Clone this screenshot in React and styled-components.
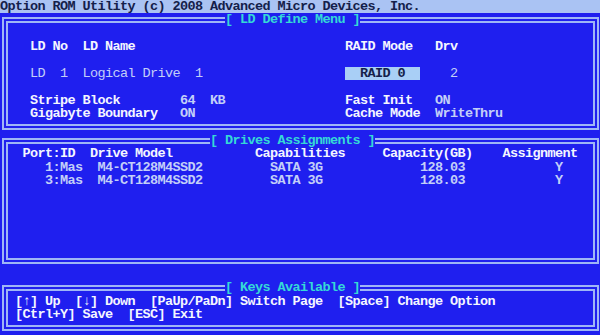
import React from "react";
import styled, { createGlobalStyle } from "styled-components";

const COL = 7.5;
const ROW = 13.4;

const GlobalStyle = createGlobalStyle`
  html, body {
    margin: 0;
    padding: 0;
    background: #1f1fef;
    overflow: hidden;
  }
`;

const tones = {
  label: "#f4f6ff",
  value: "#c3cff8",
  dark: "#14204a",
  title: "#35d9d6",
};

const Screen = styled.div`
  width: 600px;
  height: 335px;
  background: #1f1fef;
  display: flex;
  flex-direction: column;
  font-family: "Liberation Mono", "DejaVu Sans Mono", monospace;
  font-size: 13.5px;
  letter-spacing: -0.601px;
  line-height: ${ROW}px;
  overflow: hidden;
`;

const TitleBar = styled.div`
  height: ${ROW}px;
  background: #aac3f3;
  display: grid;
  grid-template-columns: repeat(80, ${COL}px);
  align-items: center;
`;

const Panel = styled.div`
  position: relative;
  margin: ${(p) => p.$gap}px 1.5px 0;
  border: 6px double #9fb6f6;
  padding: ${(ROW - 6) / 2}px 0;
  display: flex;
  flex-direction: column;
`;

const PanelTitle = styled.div`
  position: absolute;
  top: ${-6 + 3 - ROW / 2}px;
  left: ${(p) => p.$col * COL - COL}px;
  height: ${ROW}px;
  background: #1f1fef;
  color: ${tones.title};
  font-weight: 700;
  white-space: pre;
`;

const Row = styled.div`
  height: ${ROW}px;
  display: grid;
  grid-template-columns: repeat(78, ${COL}px);
  align-items: center;
`;

const Cell = styled.span`
  grid-column: ${(p) => p.$col} / span ${(p) => p.$span};
  color: ${(p) => tones[p.$tone || "label"]};
  font-weight: ${(p) => (p.$thin ? 400 : 700)};
  white-space: pre;
`;

const BarText = styled(Cell)`
  grid-column: ${(p) => p.$col + 1} / span ${(p) => p.$span};
`;

const Highlight = styled.span`
  grid-column: ${(p) => p.$col} / span ${(p) => p.$span};
  height: ${ROW}px;
  background: #a9cff6;
  color: ${tones.dark};
  font-weight: 700;
  white-space: pre;
  display: flex;
  align-items: center;
  justify-content: center;
`;

const ldRows = [
  [],
  [
    { c: 4, t: "LD No" },
    { c: 11, t: "LD Name" },
    { c: 46, t: "RAID Mode" },
    { c: 58, t: "Drv" },
  ],
  [],
  [
    { c: 4, t: "LD  1", tone: "value", thin: true },
    { c: 11, t: "Logical Drive  1", tone: "value", thin: true },
    { c: 46, t: "RAID 0", span: 10, box: true },
    { c: 60, t: "2", tone: "value", thin: true },
  ],
  [],
  [
    { c: 4, t: "Stripe Block" },
    { c: 24, t: "64  KB", tone: "value" },
    { c: 46, t: "Fast Init" },
    { c: 58, t: "ON", tone: "value" },
  ],
  [
    { c: 4, t: "Gigabyte Boundary" },
    { c: 24, t: "ON", tone: "value" },
    { c: 46, t: "Cache Mode" },
    { c: 58, t: "WriteThru", tone: "value" },
  ],
];

const drives = [
  { port: "1:Mas", model: "M4-CT128M4SSD2", cap: "SATA 3G", size: "128.03", asg: "Y" },
  { port: "3:Mas", model: "M4-CT128M4SSD2", cap: "SATA 3G", size: "128.03", asg: "Y" },
];

const driveRows = [
  [
    { c: 3, t: "Port:ID" },
    { c: 12, t: "Drive Model" },
    { c: 34, t: "Capabilities" },
    { c: 51, t: "Capacity(GB)" },
    { c: 67, t: "Assignment" },
  ],
  ...drives.map((d) => [
    { c: 6, t: d.port, tone: "value" },
    { c: 13, t: d.model, tone: "value" },
    { c: 36, t: d.cap, tone: "value" },
    { c: 56, t: d.size, tone: "value" },
    { c: 74, t: d.asg, tone: "value" },
  ]),
  [],
  [],
  [],
  [],
  [],
];

const keyRows = [
  [
    { c: 2, t: "[\u2191] Up" },
    { c: 10, t: "[\u2193] Down" },
    { c: 20, t: "[PaUp/PaDn] Switch Page" },
    { c: 45, t: "[Space] Change Option" },
  ],
  [
    { c: 2, t: "[Ctrl+Y] Save" },
    { c: 17, t: "[ESC] Exit" },
  ],
];

function Rows({ rows }) {
  return rows.map((cells, i) => (
    <Row key={i}>
      {cells.map((cell, j) =>
        cell.box ? (
          <Highlight key={j} $col={cell.c} $span={cell.span}>
            {cell.t}
          </Highlight>
        ) : (
          <Cell
            key={j}
            $col={cell.c}
            $span={cell.span || cell.t.length}
            $tone={cell.tone}
            $thin={cell.thin}
          >
            {cell.t}
          </Cell>
        )
      )}
    </Row>
  ));
}

export default function App() {
  const title = "Option ROM Utility (c) 2008 Advanced Micro Devices, Inc.";
  return (
    <>
      <GlobalStyle />
      <Screen>
        <TitleBar>
          <BarText $col={0} $span={title.length} $tone="dark">
            {title}
          </BarText>
        </TitleBar>
        <Panel $gap={(ROW - 6) / 2}>
          <PanelTitle $col={30}>[ LD Define Menu ]</PanelTitle>
          <Rows rows={ldRows} />
        </Panel>
        <Panel $gap={ROW - 6}>
          <PanelTitle $col={28}>[ Drives Assignments ]</PanelTitle>
          <Rows rows={driveRows} />
        </Panel>
        <Panel $gap={ROW + ROW - 6}>
          <PanelTitle $col={30}>[ Keys Available ]</PanelTitle>
          <Rows rows={keyRows} />
        </Panel>
      </Screen>
    </>
  );
}
